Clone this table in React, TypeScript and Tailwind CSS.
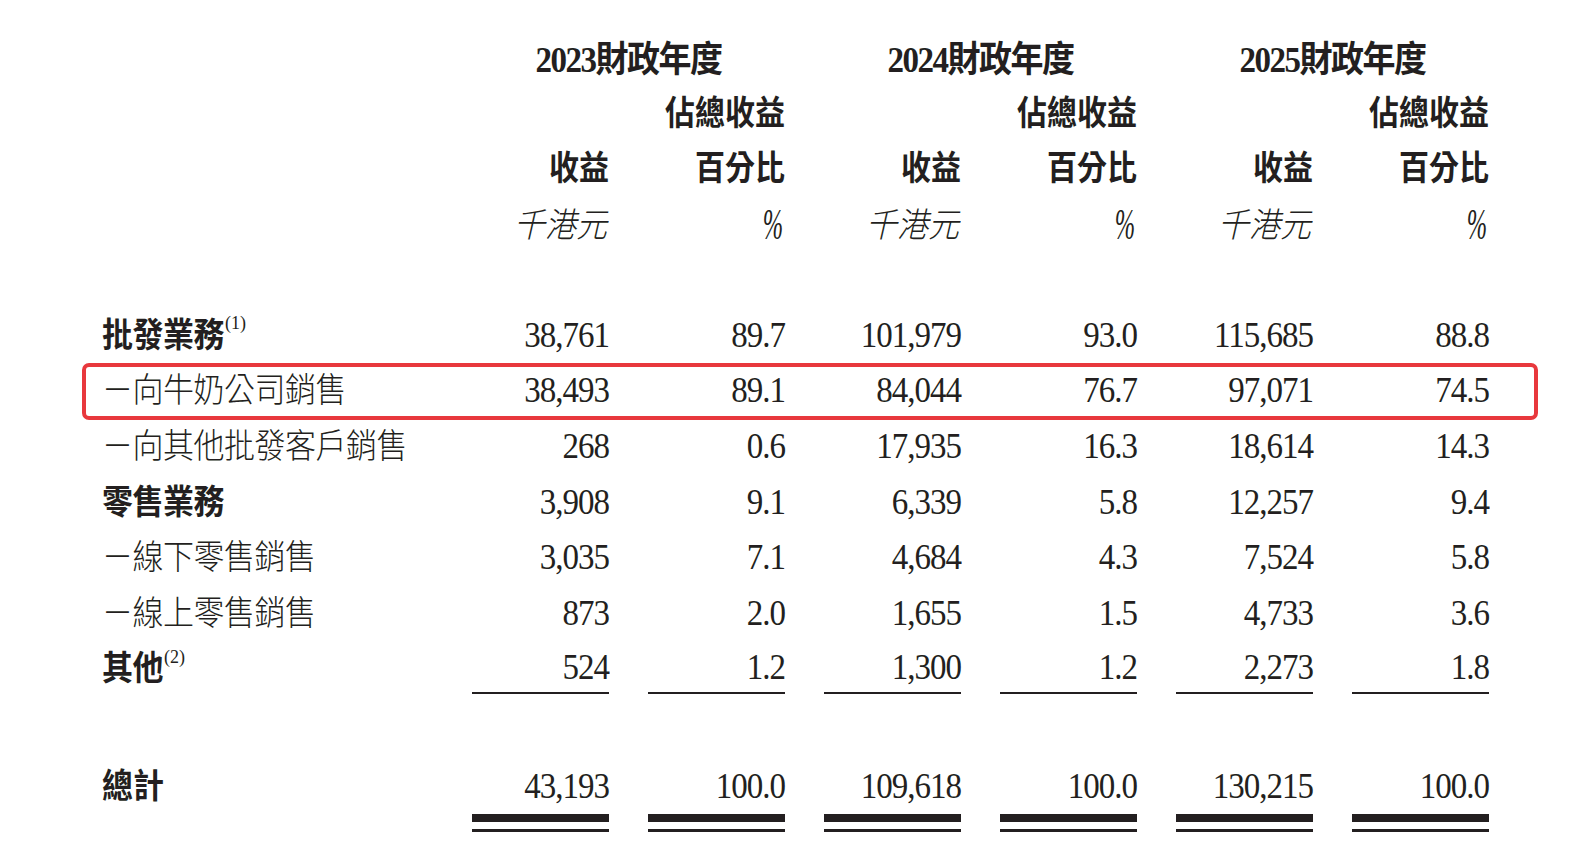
import React from "react";

const FONT = "font-['Liberation_Serif','Noto_Sans_CJK_TC',serif]";

type Row = {
  label: string;
  sup?: string;
  bold?: boolean;
  vals: string[];
  highlight?: boolean;
  underline?: boolean;
};

const rows: Row[] = [
  { label: "批發業務", sup: "(1)", bold: true, vals: ["38,761", "89.7", "101,979", "93.0", "115,685", "88.8"] },
  { label: "－向牛奶公司銷售", vals: ["38,493", "89.1", "84,044", "76.7", "97,071", "74.5"], highlight: true },
  { label: "－向其他批發客戶銷售", vals: ["268", "0.6", "17,935", "16.3", "18,614", "14.3"] },
  { label: "零售業務", bold: true, vals: ["3,908", "9.1", "6,339", "5.8", "12,257", "9.4"] },
  { label: "－線下零售銷售", vals: ["3,035", "7.1", "4,684", "4.3", "7,524", "5.8"] },
  { label: "－線上零售銷售", vals: ["873", "2.0", "1,655", "1.5", "4,733", "3.6"] },
  { label: "其他", sup: "(2)", bold: true, vals: ["524", "1.2", "1,300", "1.2", "2,273", "1.8"], underline: true },
];

const totals = ["43,193", "100.0", "109,618", "100.0", "130,215", "100.0"];
const years = ["2023", "2024", "2025"];

const GRID = "grid grid-cols-[433px_repeat(6,176px)]";
const NUM = "inline-block text-[33px] leading-none tracking-[-1px] scale-y-[1.08]";

function Label({ row }: { row: Row }) {
  return (
    <div className="flex items-center pl-[102px]">
      <span
        className={`inline-block text-[31px] leading-none tracking-[-0.5px] scale-y-[1.1] ${
          row.bold ? "font-bold" : "font-light"
        }`}
      >
        {row.label}
      </span>
      {row.sup && (
        <span className="relative -top-[12px] ml-[1px] text-[18px] leading-none font-normal">{row.sup}</span>
      )}
    </div>
  );
}

export default function App() {
  return (
    <div className={`w-[1584px] h-[852px] overflow-hidden bg-white text-[#231f20] ${FONT} pt-[33px]`}>
      {/* Header row 1: fiscal years */}
      <div className={`${GRID} h-[54px]`}>
        <div />
        {years.map((y) => (
          <div key={y} className="col-span-2 pl-[39px] flex items-center justify-center">
            <span className="inline-block text-[33px] font-bold leading-none tracking-[-1.5px] scale-y-[1.1]">
              {y}財政年度
            </span>
          </div>
        ))}
      </div>
      {/* Header row 2 */}
      <div className={`${GRID} h-[54px]`}>
        <div />
        {[0, 1, 2, 3, 4, 5].map((i) => (
          <div key={i} className="pl-[39px] flex items-center justify-end">
            {i % 2 === 1 && (
              <span className="inline-block text-[30px] font-bold leading-none scale-y-[1.12]">佔總收益</span>
            )}
          </div>
        ))}
      </div>
      {/* Header row 3 */}
      <div className={`${GRID} h-[56px]`}>
        <div />
        {[0, 1, 2, 3, 4, 5].map((i) => (
          <div key={i} className="pl-[39px] flex items-center justify-end">
            <span className="inline-block text-[30px] font-bold leading-none scale-y-[1.12]">
              {i % 2 === 0 ? "收益" : "百分比"}
            </span>
          </div>
        ))}
      </div>
      {/* Header row 4 */}
      <div className={`${GRID} h-[56px]`}>
        <div />
        {[0, 1, 2, 3, 4, 5].map((i) => (
          <div key={i} className="pl-[39px] flex items-center justify-end">
            {i % 2 === 0 ? (
              <span className="inline-block text-[31px] italic font-light leading-none scale-y-[1.1] pr-[2px]">
                千港元
              </span>
            ) : (
              <span className="inline-block origin-right text-[34px] italic font-normal leading-none scale-x-[0.72] scale-y-[1.3] pr-[3px]">
                %
              </span>
            )}
          </div>
        ))}
      </div>

      <div className="h-[54.6px]" />

      {/* Body rows */}
      {rows.map((row) => (
        <div key={row.label} className={`${GRID} h-[55.6px] relative`}>
          {row.highlight && (
            <div className="absolute left-[82px] top-[0px] w-[1456px] h-[57px] border-[4px] border-[#e8383d] rounded-[7px] pointer-events-none" />
          )}
          <Label row={row} />
          {row.vals.map((v, i) => (
            <div key={i} className="pl-[39px]">
              <div
                className={`flex items-center justify-end ${
                  row.underline ? "h-[53px] border-b-2 border-[#231f20] pt-[2px]" : "h-full"
                }`}
              >
                <span className={NUM}>{v}</span>
              </div>
            </div>
          ))}
        </div>
      ))}

      <div className="h-[63.2px]" />

      {/* Total row */}
      <div className={`${GRID} h-[54px]`}>
        <div className="flex items-center pl-[102px]">
          <span className="inline-block text-[31px] font-bold leading-none scale-y-[1.1]">總計</span>
        </div>
        {totals.map((v, i) => (
          <div key={i} className="pl-[39px] flex items-center justify-end">
            <span className={NUM}>{v}</span>
          </div>
        ))}
      </div>
      <div className={`${GRID}`}>
        <div />
        {totals.map((_, i) => (
          <div key={i} className="pl-[39px] flex flex-col">
            <div className="h-[8px] bg-[#231f20]" />
            <div className="h-[7px]" />
            <div className="h-[3px] bg-[#231f20]" />
          </div>
        ))}
      </div>
    </div>
  );
}
